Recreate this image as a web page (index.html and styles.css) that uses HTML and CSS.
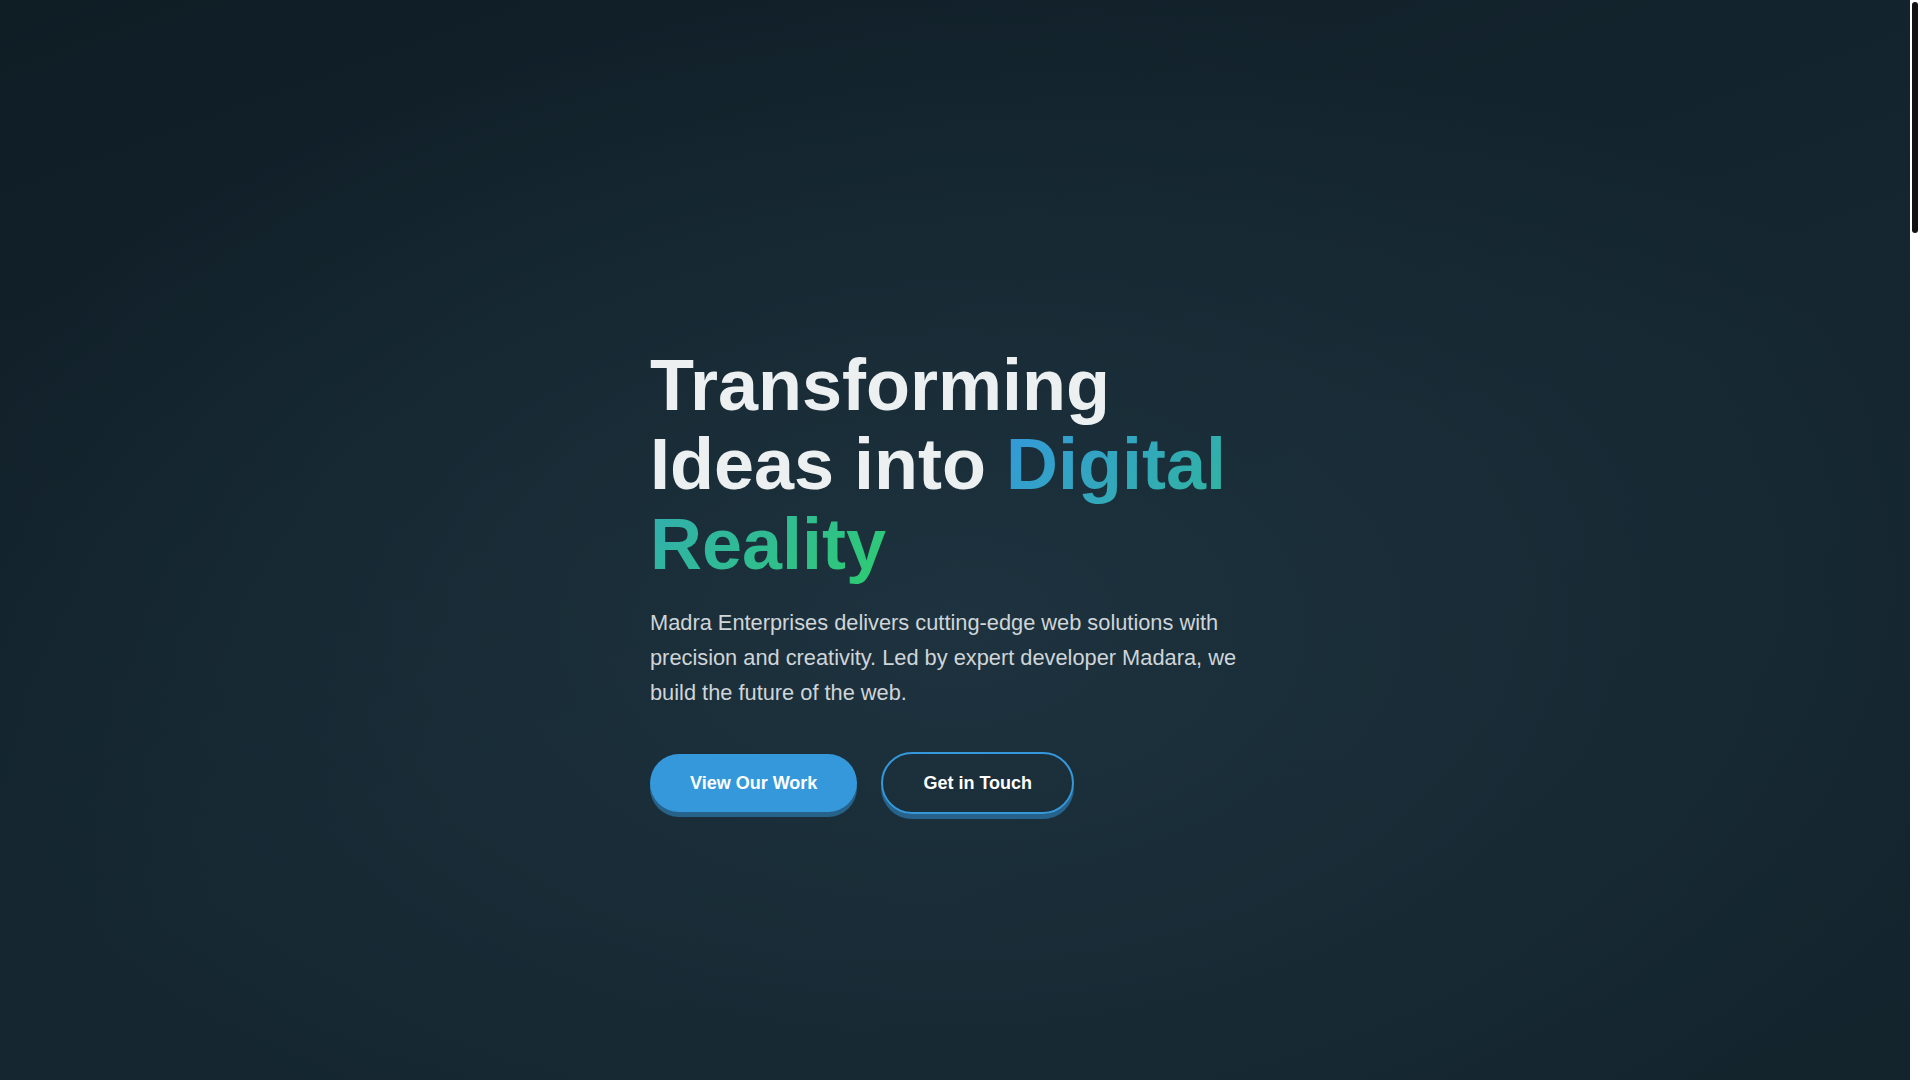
FILE: index.html
```html
<!DOCTYPE html>
<html lang="en">
<head>
<meta charset="utf-8">
<title>Madra Enterprises</title>
<link rel="stylesheet" href="styles.css">
</head>
<body>
<main class="page">
  <section class="hero" id="home">
    <div class="hero-content">
      <h1 class="hero-title">Transforming Ideas into <span class="gradient-text">Digital Reality</span></h1>
      <p class="hero-text">Madra Enterprises delivers cutting-edge web solutions with precision and creativity. Led by expert developer Madara, we build the future of the web.</p>
      <div class="hero-actions">
        <a class="btn btn-primary" href="#work">View Our Work</a>
        <a class="btn btn-outline" href="#contact">Get in Touch</a>
      </div>
    </div>
  </section>
  <section class="section" id="about">
    <div class="section-inner">
      <h2 class="section-title">About Us</h2>
      <p class="section-text">We craft fast, accessible and beautiful websites for businesses of every size.</p>
    </div>
  </section>
  <section class="section" id="services">
    <div class="section-inner">
      <h2 class="section-title">Services</h2>
      <p class="section-text">Web design, development, e-commerce and ongoing support.</p>
    </div>
  </section>
  <section class="section" id="work">
    <div class="section-inner">
      <h2 class="section-title">Our Work</h2>
      <p class="section-text">A selection of recent projects delivered for our clients.</p>
    </div>
  </section>
  <section class="section" id="contact">
    <div class="section-inner">
      <h2 class="section-title">Contact</h2>
      <p class="section-text">Tell us about your project and we will get back to you shortly.</p>
    </div>
  </section>
</main>
<div class="scrollbar" aria-hidden="true"><div class="scrollbar-thumb"></div></div>
</body>
</html>
```

FILE: styles.css
```css
* {
  box-sizing: border-box;
}

body {
  margin: 0;
  padding-right: 10px;
  font-family: "Liberation Sans", Arial, Helvetica, sans-serif;
  background: #12212a;
  color: #ecf0f1;
}

.scrollbar {
  position: fixed;
  top: 0;
  right: 0;
  width: 10px;
  height: 100vh;
  background: #ffffff;
  padding: 2px;
}

.scrollbar-thumb {
  width: 6px;
  height: 231px;
  background: #121212;
  border-radius: 3px;
}

.hero {
  height: 100vh;
  padding-top: 80px;
  display: flex;
  align-items: center;
  justify-content: center;
  background:
    radial-gradient(ellipse 55% 60% at 50% 58%, rgba(30, 52, 64, 0.9) 0%, rgba(30, 52, 64, 0) 100%),
    linear-gradient(160deg, #0f1d25 0%, #152630 55%, #14242d 100%);
}

.hero-content {
  width: 610px;
}

.hero-title {
  margin: 0 0 21px;
  font-size: 72px;
  line-height: 1.1;
  font-weight: 700;
  color: #ecf0f1;
}

.gradient-text {
  background: linear-gradient(135deg, #3498db 0%, #2ecc71 100%);
  -webkit-background-clip: text;
  background-clip: text;
  color: transparent;
}

.hero-text {
  margin: 0 0 42px;
  font-size: 21.8px;
  line-height: 1.615;
  color: #cfd5d8;
}

.hero-actions {
  display: flex;
  align-items: center;
  gap: 24px;
}

.btn {
  display: inline-block;
  padding: 14.4px 40px;
  font-size: 18px;
  line-height: 1.6;
  font-weight: 700;
  color: #ffffff;
  text-decoration: none;
  border-radius: 50px;
}

.btn-primary {
  background: #3498db;
  box-shadow: 0 5px 0 #27628b;
}

.btn-outline {
  border: 2px solid #3498db;
  padding: 14.4px 40px;
  background: transparent;
  box-shadow: 0 5px 0 #27628b;
}

.section {
  height: 980px;
  padding: 100px 0;
  background: #14242d;
}

.section-inner {
  width: 1200px;
  margin: 0 auto;
}

.section-title {
  margin: 0 0 16px;
  font-size: 40px;
}

.section-text {
  margin: 0;
  font-size: 18px;
  color: #cfd5d8;
}
```
